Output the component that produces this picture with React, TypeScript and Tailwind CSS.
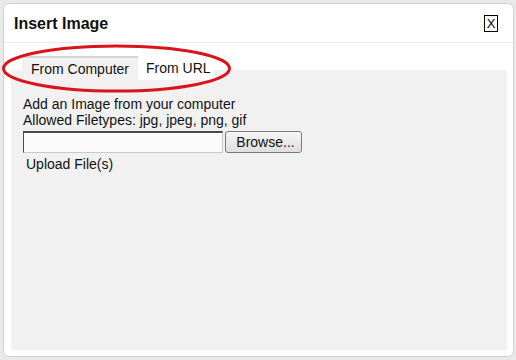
export default function App() {
  return (
    <div
      className="w-[516px] h-[360px] bg-[#e9e9e9] pt-[3px] pl-[3px] overflow-hidden"
      style={{ fontFamily: '"Liberation Sans", Arial, sans-serif' }}
    >
      <div className="relative w-[511px] h-[354px] bg-white border border-[#d2d2d2] rounded-[6px] flex flex-col">
        {/* Header */}
        <div className="h-[39px] shrink-0 border-b border-[#ebebeb] flex items-center justify-between pl-[10px] pr-[15px]">
          <span className="text-[16px] font-bold text-[#111] leading-none mt-[1px]">Insert Image</span>
          <button className="w-[14px] h-[17px] border border-black flex items-center justify-center text-[13px] leading-none text-black bg-white mt-[1px]">
            X
          </button>
        </div>
        {/* Body */}
        <div className="flex-1 flex flex-col pl-[7px] pr-[6px] pb-[6px] pt-[13px]">
          <div className="flex-1 flex flex-col bg-[linear-gradient(to_bottom,#ffffff_14px,#f1f1f1_14px)]">
            <div className="flex h-[24px] pl-[11px] text-[14px] text-[#111]">
              <div className="w-[116px] h-[24px] bg-[#f1f1f1] border-t-2 border-[#d4d4d4] flex items-center pl-[9px]">
                From Computer
              </div>
              <div className="w-[76px] h-[24px] bg-white flex items-center pl-[8px] pt-[1px]">
                From URL
              </div>
            </div>
            <div className="pl-[12px] pt-[16px] text-[14px] text-[#111] leading-[16px]">
              <div>Add an Image from your computer</div>
              <div>Allowed Filetypes: jpg, jpeg, png, gif</div>
              <div className="flex gap-[2px] mt-[3px]">
                <div className="w-[200px] h-[22px] bg-[#fbfbfb] border border-t-[#4a4a4a] border-l-[#4a4a4a] border-b-[#c8c8c8] border-r-[#c8c8c8] border-t-2"></div>
                <button className="w-[77px] h-[22px] rounded-[3px] border border-[#7a7a7a] bg-[linear-gradient(to_bottom,#f6f6f6,#dedede)] text-[14px] text-[#111] leading-none flex items-center justify-center pl-[4px]">
                  Browse...
                </button>
              </div>
              <div className="pl-[3px] mt-[3px]">Upload File(s)</div>
            </div>
          </div>
        </div>
        {/* Red annotation ellipse */}
        <svg
          className="absolute left-[-4px] top-[-4px] pointer-events-none"
          width="240"
          height="100"
          viewBox="0 0 240 100"
        >
          <ellipse cx="116.5" cy="68.5" rx="113" ry="22.5" fill="none" stroke="#d9141b" strokeWidth="3" />
        </svg>
      </div>
    </div>
  );
}
